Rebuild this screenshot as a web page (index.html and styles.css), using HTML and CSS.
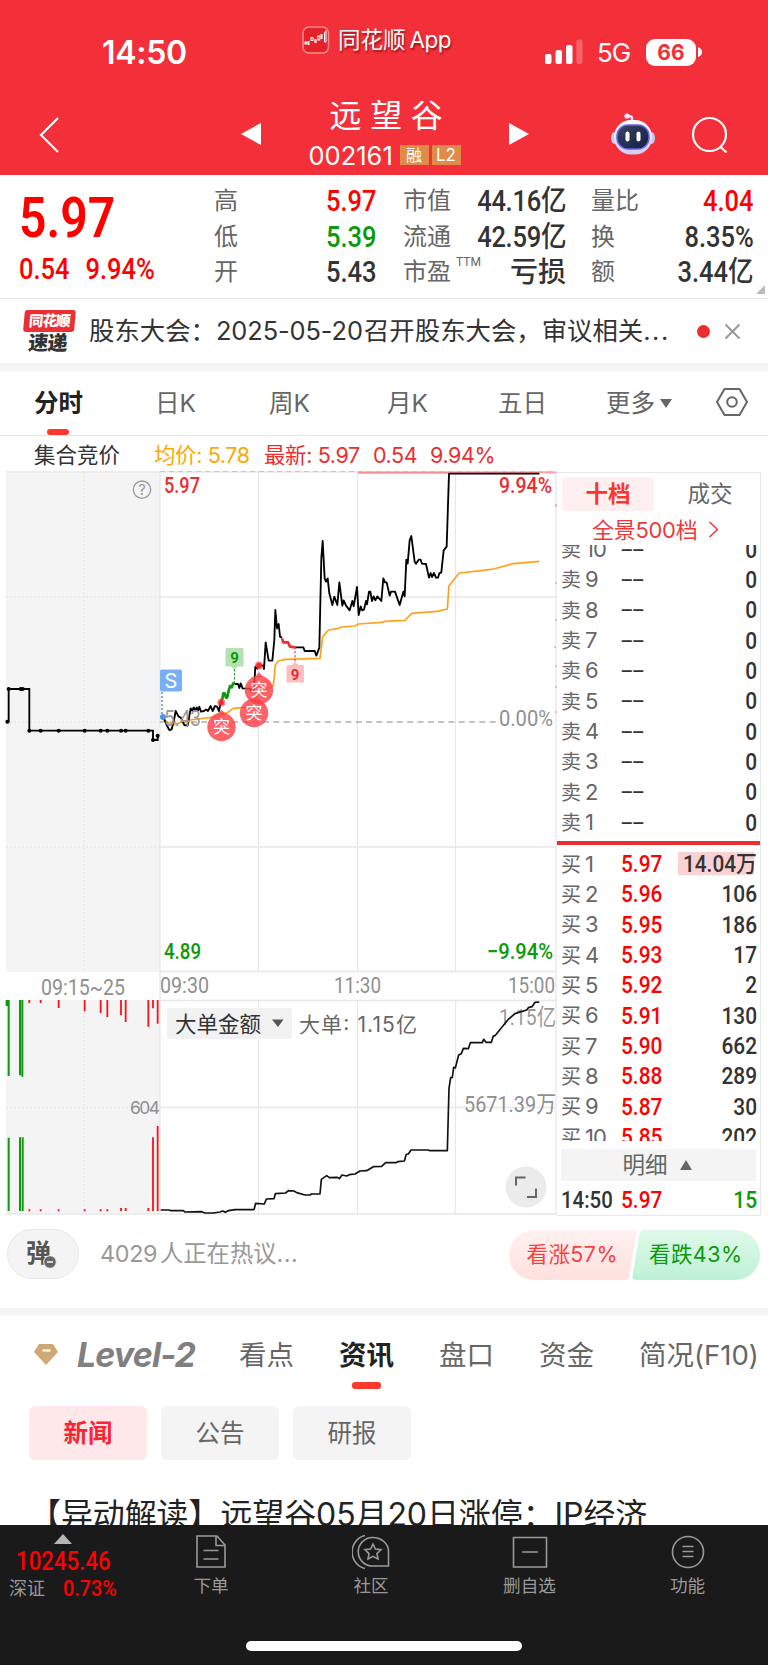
FILE: index.html
```html
<!DOCTYPE html>
<html lang="zh-CN">
<head>
<meta charset="utf-8">
<title>远望谷 002161</title>
<link rel="stylesheet" href="styles.css">
</head>
<body>
<div class="app">
  <header class="header">
    <div class="status">
      <span class="clock">14:50</span>
      <div class="brand">
        <svg width="28" height="28" viewBox="0 0 28 28"><rect x="1" y="1" width="25.500" height="26" rx="6" fill="#e3222a" stroke="#ff8a8a" stroke-width="1.500"/><g fill="#fff" stroke="#fff"><rect x="3" y="16" width="1.500" height="2"/><path d="M6.500 15v4M13.500 13v4M19.500 8v5" stroke-width="2"/><g fill="none" stroke-width="1"><rect x="9" y="11.500" width="2" height="3"/><rect x="15.800" y="10" width="2" height="4"/><path d="M22.500 16V7l1.500-2.500V16z"/></g></g></svg>
        <span>同花顺<i>App</i></span>
      </div>
      <div class="signal">
        <svg width="40" height="26" viewBox="0 0 40 26" fill="#fff"><rect x="1" y="15" width="6.500" height="10" rx="2"/><rect x="11.500" y="11" width="6.500" height="14" rx="2"/><rect x="22" y="6" width="6.500" height="19" rx="2"/><rect x="32.500" y="0.500" width="6" height="24.500" rx="2" opacity=".25"/></svg>
        <span class="net">5G</span>
        <span class="battery">66</span>
        <svg class="nub" width="5" height="10" viewBox="0 0 5 10"><path d="M0 0Q4 1.500 4 5T0 10z" fill="#fff"/></svg>
      </div>
    </div>
    <div class="navbar">
      <svg class="back" width="24" height="38" viewBox="0 0 24 38"><path d="M20 2 3 19 20 36" fill="none" stroke="#fff" stroke-width="2.200"/></svg>
      <svg class="prev" width="22" height="24" viewBox="0 0 22 24"><path d="M1 12 21 1v22z" fill="#fff"/></svg>
      <div class="stock">
        <h1>远望谷</h1>
        <div class="code"><span>002161</span><b class="cjk">融</b><b>L2</b></div>
      </div>
      <svg class="next" width="22" height="24" viewBox="0 0 22 24"><path d="M21 12 1 1v22z" fill="#fff"/></svg>
      <svg class="robot" width="46" height="44" viewBox="0 0 46 44">
        <defs><linearGradient id="shell" x2="0" y2="1"><stop stop-color="#fff"/><stop offset="1" stop-color="#cfcdf6"/></linearGradient><linearGradient id="face" x2="1" y2="1"><stop stop-color="#3a4565"/><stop offset="1" stop-color="#101d45"/></linearGradient></defs>
        <path d="M22 9V6q0-2-5-2" fill="none" stroke="#e9e7ff" stroke-width="2.500"/><circle cx="17" cy="4" r="2.600" fill="#f0efff"/>
        <ellipse cx="4.500" cy="26" rx="3.500" ry="6" fill="#c9c7f2"/><ellipse cx="41.500" cy="26" rx="3.500" ry="6" fill="#c9c7f2"/>
        <rect x="4" y="8" width="38" height="34.500" rx="17" fill="url(#shell)"/>
        <rect x="7" y="13" width="32" height="24" rx="11" fill="url(#face)" stroke="#6f62de" stroke-width="1.500"/>
        <rect x="15.500" y="19.500" width="4" height="10" rx="2" fill="#fff"/><rect x="26.500" y="19.500" width="4" height="10" rx="2" fill="#fff"/>
      </svg>
      <svg class="search" width="38" height="38" viewBox="0 0 38 38" fill="none" stroke="#fff" stroke-width="2.200"><circle cx="18.500" cy="18.500" r="16.500"/><path d="m29.500 31 6 5.500"/></svg>
    </div>
  </header>

  <section class="quote">
    <div class="price"><div class="last">5.97</div><div class="change"><span>0.54</span><span>9.94%</span></div></div>
    <dl class="stats s1">
      <dt>高</dt><dd class="r">5.97</dd><dt>低</dt><dd class="g">5.39</dd><dt>开</dt><dd>5.43</dd>
    </dl>
    <dl class="stats s2">
      <dt>市值</dt><dd>44.16亿</dd><dt>流通</dt><dd>42.59亿</dd><dt class="pe">市盈<sup>TTM</sup></dt><dd class="word">亏损</dd>
    </dl>
    <dl class="stats s3">
      <dt>量比</dt><dd class="r">4.04</dd><dt>换</dt><dd>8.35%</dd><dt>额</dt><dd>3.44亿</dd>
    </dl>
    <i class="corner"></i>
  </section>

  <section class="flash">
    <div class="flashlogo"><b>同花顺</b><em>速递</em></div>
    <p>股东大会：<span class="date">2025-05-20</span>召开股东大会，审议相关<span class="dots">...</span></p>
    <i class="dot"></i>
    <svg width="17" height="17" viewBox="0 0 17 17"><path d="m1.500 1.500 14 14m0-14-14 14" stroke="#999" stroke-width="2"/></svg>
  </section>

  <nav class="periods">
    <span class="on">分时</span><span>日K</span><span>周K</span><span>月K</span><span>五日</span><span>更多</span>
    <svg class="caret" width="12" height="9" viewBox="0 0 12 9"><path d="M0 0h12L6 9z" fill="#666"/></svg>
    <svg class="hex" width="32" height="30" viewBox="0 0 32 30" fill="none" stroke="#666" stroke-width="2"><path d="M8.500 2h15L31 15l-7.500 13h-15L1 15z" stroke-linejoin="round"/><circle cx="16" cy="15" r="4.800"/></svg>
  </nav>

  <div class="legend"><span class="lg0">集合竞价</span><span class="lg1">均价: 5.78</span><span class="lg2">最新: 5.97</span><span class="lg3">0.54</span><span class="lg4">9.94%</span></div>

  <main class="board">
    <svg class="chart" width="557" height="746" viewBox="0 470 557 746">
      <path d="M6 472h154v500H6zM6 1000h154v214H6z" fill="#f4f4f4"/>
      <g fill="none" stroke="#e8e8e8" stroke-width="1.300">
        <path d="M6 472H557M160 472V1214M258.500 472v500M357.500 472v500M455.500 472v500M556 472V1215M160 597H556M160 847H556M160 971.500H556M160 1000.500H556M258.500 1000v214M357.500 1000v214M455.500 1000v214M160 1107.500H556M6 1214H556"/>
        <path d="M84 472V972M84 1000V1214M6 597H160M6 722H160M6 847H160M6 1107.500H160" stroke-dasharray="2 2"/>
      </g>
      <path d="M160 471.500H552" stroke="#d9c7a0" stroke-dasharray="5 4"/>
      <path d="M358 472.500H556" stroke="#f8a5a7" stroke-width="2"/>
      <path d="M160 722H500" stroke="#888" stroke-width="1.200" stroke-dasharray="6 4.300"/>
      <path d="M556 504v3M556 582v2M556 619v2M554 647h2M556 665v2M556 686v2M556 711v2" stroke="#f27d7d"/>

      <g transform="translate(0 470) scale(.33333)">
        <path d="M20 755h6v-98h62v125h371v28h14v-14" fill="none" stroke="#000" stroke-width="5.500"/>
        <g><circle cx="26" cy="657" r="6"/><circle cx="62" cy="657" r="6"/><circle cx="68" cy="657" r="6"/><circle cx="22" cy="755" r="6"/><circle cx="88" cy="782" r="6"/><circle cx="122" cy="782" r="6"/><circle cx="176" cy="782" r="6"/><circle cx="254" cy="782" r="6"/><circle cx="302" cy="782" r="6"/><circle cx="322" cy="782" r="6"/><circle cx="363" cy="782" r="6"/><circle cx="377" cy="782" r="6"/><circle cx="445" cy="782" r="6"/><circle cx="459" cy="810" r="6"/><circle cx="473" cy="797" r="6"/></g>
        <g fill="none" stroke="#999" stroke-width="4"><circle cx="426" cy="59" r="26"/></g>
      </g>
      <text x="142" y="495" class="gray" font-size="14" text-anchor="middle">?</text>

      <g fill="none" stroke="#ffa21a" stroke-width="5" stroke-linejoin="round">
        <path transform="translate(150 600) scale(.33333)" d="M38 358 50 365 70 374 120 360 200 350 215 343 232 338 250 325 310 320 320 290 340 270 370 258"/>
        <path transform="translate(270 465) scale(.33333)" d="M10 664 16 600 25 588 45 583 150 580 158 515 176 495 205 490 215 486 255 483 265 477 335 472 345 469 405 466 425 445 500 439 532 432 537 362 548 348 568 324 640 316 670 312 730 296 808 289"/>
      </g>
      <g fill="none" stroke="#000" stroke-width="5.500" stroke-linejoin="round">
        <g transform="translate(150 600) scale(.33333)">
          <path d="M36 355 42 355 50 375 58 390 65 388 72 360 77 333 86 350 92 352 103 375 113 377 122 325 127 332 131 322 136 332 140 322 144 332 148 320 153 335 162 333 168 328 174 333 182 318 188 333 195 318 201 320 207 333 212 308M255 252 264 252 268 264 272 250 278 265 300 266 304 275 312 270 316 200 322 206 326 197 340 197 342 207 347 127 356 182 367 182 373 120 376 30 381 85 386 72 390 110 396 113M435 142 460 142 464 153 494 153 499 167 508 143"/>
          <path stroke="#0a9a0a" stroke-width="8" d="M213 307 218 292 220 280 224 280 228 293 232 292 236 272 240 258 245 262 250 250 255 252"/>
          <path stroke="#eb2f35" stroke-width="8" d="M396 115 400 127 414 127 420 140 435 142"/>
        </g>
        <path transform="translate(270 465) scale(.33333)" d="M148 548 154 280 158 228 164 340 168 350 173 340 178 385 187 420 193 395 202 420 208 352 217 422 221 406 228 422 239 436 247 408 251 424 261 366 266 450 272 424 276 436 282 434 288 408 291 418 297 380 301 380 306 408 311 394 316 406 322 394 334 408 340 340 345 352 350 352 359 392 363 380 375 380 389 420 400 380 404 394 409 284 413 296 419 226 424 213 434 290 438 296 446 284 452 284 456 296 468 297 477 338 482 324 486 336 492 324 498 338 504 338 508 325 514 322 521 256 530 245 537 26 808 26"/>
      </g>
      <path d="M358 473H540" stroke="#e0343a" stroke-opacity=".35" stroke-width="1"/>

      <g class="din">
        <text x="164" y="493" class="red" textLength="36" lengthAdjust="spacingAndGlyphs">5.97</text>
        <text x="499" y="493" class="red" textLength="53" lengthAdjust="spacingAndGlyphs">9.94%</text>
        <text x="164" y="959" class="green" textLength="37" lengthAdjust="spacingAndGlyphs">4.89</text>
        <text x="487" y="959" class="green" textLength="66" lengthAdjust="spacingAndGlyphs">−9.94%</text>
        <text x="164" y="726" class="pale" textLength="37" lengthAdjust="spacingAndGlyphs">5.43</text>
        <text x="499" y="726" class="gray" textLength="54" lengthAdjust="spacingAndGlyphs">0.00%</text>
        <text x="41" y="994.500" class="gray" textLength="84" lengthAdjust="spacingAndGlyphs">09:15~25</text>
        <text x="160" y="993" class="gray" textLength="49" lengthAdjust="spacingAndGlyphs">09:30</text>
        <text x="334" y="993" class="gray" textLength="47" lengthAdjust="spacingAndGlyphs">11:30</text>
        <text x="508" y="993" class="gray" textLength="47" lengthAdjust="spacingAndGlyphs">15:00</text>
        <text x="499" y="1025" class="pale" textLength="57" lengthAdjust="spacingAndGlyphs">1.15亿</text>
        <text x="464" y="1112" class="gray" textLength="92" lengthAdjust="spacingAndGlyphs">5671.39万</text>
      </g>
      <text x="130" y="1114" class="gray" font-size="17.500" textLength="30">604</text>

      <path d="M162 692v22" stroke="#77aff5" stroke-width="2" stroke-dasharray="2 2"/>
      <rect x="160" y="669.500" width="22" height="22" rx="2" fill="#7ab0f3"/><text x="171" y="687.500" font-size="20" fill="#fff" text-anchor="middle">S</text>
      <circle cx="163" cy="717" r="3" fill="#4c93ef"/>
      <path d="M234.500 665v17" stroke="#21a121" stroke-width="1.200" stroke-dasharray="2.500 1.500"/>
      <path d="M227 648h15a1.500 1.500 0 0 1 1.500 1.500v17H238l-3.500 3-3.500-3h-5.500v-17a1.500 1.500 0 0 1 1.500-1.500z" fill="#b5e2b5"/>
      <text x="234.500" y="663" font-size="15" class="green mark">9</text>
      <path d="M295 647v18" stroke="#eb4c50" stroke-width="1.200" stroke-dasharray="2.500 1.500"/>
      <path d="M287.500 665h4l3.500-3 3.500 3h4a1.500 1.500 0 0 1 1.500 1.500v16h-17.500v-16z" fill="#f9c0c2"/>
      <text x="295" y="679.500" font-size="15" class="red mark">9</text>
      <g fill="#fb262c"><circle cx="221.300" cy="702.500" r="4" opacity=".55"/><circle cx="221.300" cy="702.500" r="2.500"/><circle cx="259" cy="665.500" r="4" opacity=".55"/><circle cx="259" cy="665.500" r="2.700"/></g>
      <g fill="#ff4047" fill-opacity=".82"><circle cx="221.500" cy="727" r="14.200"/><path d="m217 714 4.500-4 4.500 4z"/><circle cx="254" cy="713" r="14.200"/><circle cx="259" cy="690" r="14.200"/><path d="m255 677 4-5 4 5z"/></g>
      <g class="tu" font-size="17" fill="#fff"><text x="221.500" y="733">突</text><text x="254" y="719">突</text><text x="259" y="696">突</text></g>

      <g transform="translate(0 920) scale(.33333)" fill="none" stroke-width="6">
        <path stroke="#119811" d="M20 240v18M26 240v228M60 240v226M67 240v230M26 653v220M60 652v221M68 652v221"/>
        <path stroke="#f5161c" stroke-width="5.500" d="M88 240v9M122 240v9M176 240v24M254 240v34M302 240v39M322 240v51M363 240v46M377 240v66M445 240v80M459 240v25M473 240v71M88 868v6M122 868v6M176 868v6M254 868v6M302 868v6M322 868v6M363 864v9M377 864v9M445 864v9M459 652v221M473 618v255"/>
      </g>
      <rect x="167" y="1008" width="125" height="31" rx="3" fill="#f2f2f2"/>
      <text x="175" y="1031.500" font-size="21.500" fill="#333">大单金额</text>
      <path d="M272 1019.500h11.500L278 1027z" fill="#555"/>
      <text x="299" y="1031.500" font-size="21" fill="#666" textLength="118">大单: 1.15亿</text>
      <g fill="none" stroke="#111" stroke-width="5" stroke-linejoin="round">
        <path transform="translate(0 920) scale(.33333)" d="M482 870 508 870 512 872 550 872 555 876 605 875 615 879 640 879 660 876 668 873 676 877 685 872 705 869 762 869"/>
        <path transform="translate(240 980) scale(.33333)" d="M42 689 47 670 73 672 79 657 102 656 106 641 137 639 145 632 162 633 170 638 195 645 210 645 214 642 240 642 244 598 260 587 268 593 292 592 298 596 306 585 320 588 328 584 345 582 360 573 380 572 400 560 425 559 437 548 468 548 473 545 493 543 499 523 505 522 513 510 565 510 570 512 622 512 627 325 632 293 637 292 641 262 646 264 656 225 664 221 670 205 685 206 691 188 727 188 731 178 738 187 754 187 760 168 765 167 805 118 825 101 860 90 865 83 876 80 885 67 898 66"/>
      </g>
      <circle cx="526" cy="1187" r="20.500" fill="#ebebeb"/>
      <path d="M516 1185.500V1177.500h9.500M527 1197h9v-8.500" fill="none" stroke="#666" stroke-width="2"/>
    </svg>

    <aside class="book">
      <div class="booktabs"><span class="on">十档</span><span>成交</span></div>
      <div class="depth">全景500档<svg width="11" height="17" viewBox="0 0 11 17"><path d="m1.500 1 8 7.500-8 7.500" fill="none" stroke="#eb3a3a" stroke-width="1.500"/></svg></div>
      <div class="asks">
        <div class="row"><span>卖<i>10</i></span><b>--</b><em>0</em></div>
        <div class="row"><span>卖<i>9</i></span><b>--</b><em>0</em></div>
        <div class="row"><span>卖<i>8</i></span><b>--</b><em>0</em></div>
        <div class="row"><span>卖<i>7</i></span><b>--</b><em>0</em></div>
        <div class="row"><span>卖<i>6</i></span><b>--</b><em>0</em></div>
        <div class="row"><span>卖<i>5</i></span><b>--</b><em>0</em></div>
        <div class="row"><span>卖<i>4</i></span><b>--</b><em>0</em></div>
        <div class="row"><span>卖<i>3</i></span><b>--</b><em>0</em></div>
        <div class="row"><span>卖<i>2</i></span><b>--</b><em>0</em></div>
        <div class="row"><span>卖<i>1</i></span><b>--</b><em>0</em></div>
      </div>
      <div class="bids">
        <div class="row hot"><span>买<i>1</i></span><b>5.97</b><em>14.04万</em></div>
        <div class="row"><span>买<i>2</i></span><b>5.96</b><em>106</em></div>
        <div class="row"><span>买<i>3</i></span><b>5.95</b><em>186</em></div>
        <div class="row"><span>买<i>4</i></span><b>5.93</b><em>17</em></div>
        <div class="row"><span>买<i>5</i></span><b>5.92</b><em>2</em></div>
        <div class="row"><span>买<i>6</i></span><b>5.91</b><em>130</em></div>
        <div class="row"><span>买<i>7</i></span><b>5.90</b><em>662</em></div>
        <div class="row"><span>买<i>8</i></span><b>5.88</b><em>289</em></div>
        <div class="row"><span>买<i>9</i></span><b>5.87</b><em>30</em></div>
        <div class="row"><span>买<i>10</i></span><b>5.85</b><em>202</em></div>
      </div>
      <div class="detail">明细<svg width="12" height="10" viewBox="0 0 12 10"><path d="M0 10h12L6 0z" fill="#666"/></svg></div>
      <div class="row tick"><span>14:50</span><b>5.97</b><em>15</em></div>
    </aside>
  </main>

  <section class="talk">
    <div class="bullet"><span>弹</span><svg width="14" height="14" viewBox="0 0 14 14"><circle cx="7" cy="7" r="6.300" fill="#666" stroke="#f4f4f4"/><path d="M4 7h6" stroke="#fff" stroke-width="1.500"/></svg></div>
    <p><span class="count">4029</span>人正在热议<span class="dots">...</span></p>
    <div class="votes">
      <svg width="254" height="52" viewBox="0 0 254 52">
        <defs><linearGradient id="up" x2="0" y2="1"><stop stop-color="#fff1f0"/><stop offset="1" stop-color="#fee1de"/></linearGradient><linearGradient id="down" x2="0" y2="1"><stop stop-color="#e0f9ea"/><stop offset="1" stop-color="#bdf1d6"/></linearGradient></defs>
        <path d="M26 1h100q3 0 2.500 3L121 48q-.5 3-4 3H26A25 25 0 0 1 26 1z" fill="url(#up)"/>
        <path d="M136 1h91a25 25 0 0 1 0 50h-99q-4 0-3.500-3.500L131.500 5q.5-4 4.500-4z" fill="url(#down)"/>
        <text x="18.500" y="33" font-size="21.500" fill="#f8413f" textLength="91">看涨57%</text>
        <text x="141" y="33" font-size="21.500" fill="#0b9a0b" textLength="93">看跌43%</text>
      </svg>
    </div>
  </section>

  <nav class="sections">
    <svg width="26" height="24" viewBox="0 0 26 24"><path d="M6 1h14l5 8-12 13L1 9z" fill="#cfa873"/><path d="M9.500 7.500h8" stroke="#fff" stroke-width="2.200"/></svg>
    <em>Level-2</em>
    <span>看点</span><span class="on">资讯</span><span>盘口</span><span>资金</span><span>简况(F10)</span>
  </nav>
  <div class="chips"><span class="on">新闻</span><span>公告</span><span>研报</span></div>
  <h2 class="headline">【异动解读】远望谷05月20日涨停：IP经济</h2>

  <footer class="footer">
    <div class="index">
      <svg width="18" height="10" viewBox="0 0 18 10"><path d="M0 10h18L9 0z" fill="#b5b5b5"/></svg>
      <b>10245.46</b>
      <div><span>深证</span><em>0.73%</em></div>
    </div>
    <div class="item"><svg width="36" height="36" viewBox="0 0 36 36"><path d="M4 2h20l8 9v22H4zM23 2v9.500h9M10.500 16.500h15M10.500 25h15"/></svg><span>下单</span></div>
    <div class="item"><svg width="38" height="36" viewBox="0 0 38 36"><path d="M20.500 3.500c9 0 16 6 16 14V32h-16a14.250 14.250 0 0 1 0-28.500zM13 1.500a17 17 0 0 0 0 33"/><path d="m21 10 2.400 5 5.600.7-4 3.900 1 5.400-5-2.600-5 2.600 1-5.400-4-3.900 5.600-.7z"/></svg><span>社区</span></div>
    <div class="item"><svg width="36" height="36" viewBox="0 0 36 36"><path d="M1.500 3.500h33v29.500h-33zM10 18h16"/></svg><span>删自选</span></div>
    <div class="item"><svg width="36" height="36" viewBox="0 0 36 36"><circle cx="18" cy="18" r="15.500"/><path d="M12.500 12.500h11M12.500 17.500h11M12.500 22.500h11"/></svg><span>功能</span></div>
    <i class="home"></i>
  </footer>
</div>
</body>
</html>
```

FILE: styles.css
```css
* { box-sizing: border-box; margin: 0; padding: 0; }
body { width: 768px; background: #fff; font-family: Inter, "Noto Sans CJK SC", sans-serif; color: #333; }
i, em { font-style: normal; }
svg { display: block; flex: none; }
.app { width: 768px; height: 1665px; overflow: hidden; display: flex; flex-direction: column; }
.app > * { flex: none; }

.header { height: 175px; background: #f33039; color: #fff; }
.status { height: 88px; display: grid; grid-template-columns: 302px 240px 226px; }
.clock { padding: 35px 0 0 102px; font-size: 32px; line-height: 36px; font-weight: 600; letter-spacing: -.3px; }
.brand { display: flex; align-items: center; gap: 8px; height: 28px; margin-top: 26px; font-size: 22.500px; text-shadow: 1px 2px 2px rgba(90,0,0,.6); white-space: nowrap; }
.brand span { line-height: 28px; }
.brand i { margin-left: 4px; letter-spacing: -.5px; }
.signal { display: flex; align-items: center; height: 28px; margin-top: 38px; padding-left: 2px; }
.net { margin-left: 13px; font-size: 26px; letter-spacing: -1px; width: 49px; }
.battery { width: 50px; height: 27px; border-radius: 9px; background: #fff; color: #f33039; font-size: 21px; line-height: 27px; font-weight: 700; text-align: center; }
.nub { margin-left: 2px; }
.navbar { height: 87px; display: flex; align-items: flex-start; }
.back { margin: 28px 0 0 38px; }
.prev { margin: 34px 0 0 178px; width: 22px; }
.stock { width: 248px; padding-top: 5px; display: flex; flex-direction: column; align-items: center; }
.stock h1 { font-size: 32px; line-height: 46px; font-weight: 400; letter-spacing: 8.700px; margin-right: -9px; }
.code { display: flex; align-items: center; height: 30px; margin-top: 1px; }
.code span { font-size: 25.500px; letter-spacing: 0; width: 91px; }
.code b { width: 29px; height: 20px; margin-right: 3px; background: #e08c48; font-weight: 400; font-size: 17px; line-height: 20px; text-align: center; }
.code .cjk { font-size: 16px; }
.next { margin: 34px 0 0 -2px; }
.robot { margin: 24px 0 0 80px; }
.search { margin: 28px 0 0 35px; }

.quote { height: 124px; border-bottom: 1px solid #e7e7e7; display: grid; grid-template-columns: 214px 163px 26px 163px 25px 163px 14px; font-family: Roboto, "Noto Sans CJK SC", sans-serif; }
.price { color: #f00; padding-left: 19px; }
.last { font-size: 56px; font-weight: 600; line-height: 60px; margin-top: 13px; transform: scaleX(.86); transform-origin: left; }
.change { font-size: 29px; font-weight: 500; line-height: 34px; margin-top: 4px; transform: scaleX(.88); transform-origin: left; display: flex; gap: 18px; }
.stats { display: grid; grid-template-columns: 48px minmax(0, 1fr); grid-auto-rows: 35.500px; padding-top: 9px; align-items: center; white-space: nowrap; }
.stats dt { font-size: 24px; line-height: 35px; color: #666; }
.stats dd { font-size: 29px; line-height: 35px; font-weight: 500; justify-self: end; transform: scaleX(.88); transform-origin: right; }
.s2 dd:nth-of-type(-n+2) { letter-spacing: -.3px; }
.stats .word { font-size: 28px; transform: none; }
.s1 { grid-column: 2; } .s2 { grid-column: 4; } .s3 { grid-column: 6; }
.pe { display: flex; }
.pe sup { font-size: 12px; line-height: 14px; margin: 0 0 0 5px; }
.r { color: #f00; } .g { color: #0a9a0a; }
.corner { grid-column: 7; align-self: end; margin: 0 0 4px 2px; width: 9px; height: 9px; background: #bbb; clip-path: polygon(100% 0, 100% 100%, 0 100%); }

.flash { height: 72px; border-bottom: 8px solid #f4f4f4; display: flex; align-items: center; }
.flashlogo { width: 53px; height: 44px; margin: 2px 14px 0 22px; display: flex; flex-direction: column; align-items: center; transform: skewX(-5deg); }
.flashlogo b { width: 51px; height: 22px; border-radius: 3px; background: #ea3034; color: #fff; font-size: 14.500px; line-height: 22px; font-weight: 900; text-align: center; letter-spacing: -.8px; }
.flashlogo em { font-size: 20px; line-height: 22px; font-weight: 900; letter-spacing: -.8px; }
.flash p { width: 608px; font-size: 25.400px; line-height: 40px; white-space: nowrap; }
.date { display: inline-block; width: 148px; letter-spacing: -.1px; }
.flash .dots { letter-spacing: 1.500px; }
.dot { width: 13px; height: 13px; border-radius: 50%; background: #ea2e30; margin-right: 14px; }

.periods { height: 65px; border-bottom: 1px solid #e7e7e7; display: flex; font-size: 24.500px; line-height: 65px; color: #666; white-space: nowrap; }
.periods .on { position: relative; padding-left: 34px; width: 83px; margin-right: 34px; color: #222; font-weight: 700; }
.periods .on::after, .sections .on::after { content: ""; position: absolute; border-radius: 3px; background: #fa392f; }
.periods .on::after { left: 47px; top: 58px; width: 22px; height: 6px; }
.periods span:nth-child(2) { width: 114px; margin-left: 38px; }
.periods span:nth-child(3) { width: 118px; }
.periods span:nth-child(4) { width: 111px; }
.periods span:nth-child(5) { width: 108px; }
.periods span:nth-child(6) { width: 54px; }
.caret { margin: 28px 0 0; }
.hex { margin: 16px 0 0 44px; }

.legend { height: 34px; display: flex; font-size: 21.500px; line-height: 38px; white-space: nowrap; color: #ea2e30; }
.lg0 { padding-left: 34px; width: 154px; color: #333; }
.lg1 { width: 110px; color: #fda900; }
.lg2 { width: 109px; } .lg3 { width: 57px; }
.legend span { letter-spacing: -.4px; }
.legend .lg0 { letter-spacing: 0; }

.board { display: flex; height: 746px; }
.chart text { white-space: pre; }
.din { font-family: Roboto, "Noto Sans CJK SC", sans-serif; font-size: 22.500px; font-weight: 500; }
.din .pale, .din .gray { font-weight: 400; }
.red { fill: #eb2c30; } .green { fill: #0a9a0a; } .gray { fill: #909090; } .pale { fill: #999; }
.mark { text-anchor: middle; font-weight: 700; font-family: Roboto, sans-serif; }
.tu { text-anchor: middle; }
.book { width: 204px; height: 744px; margin-top: 2px; border: 1px solid #e8e8e8; border-left: 0; }
.booktabs { display: flex; margin: 4px 0 0 5px; height: 34px; font-size: 22.500px; line-height: 34px; text-align: center; color: #666; }
.booktabs span { flex: none; width: 92px; margin-right: 10px; }
.booktabs .on { background: #fff0ef; border-radius: 3px; color: #fa342f; font-weight: 700; }
.depth { display: flex; align-items: center; gap: 11px; height: 34px; padding: 3px 0 0 35px; font-size: 22px; line-height: 34px; color: #eb3a3a; letter-spacing: -.3px; }
.asks { height: 300px; overflow: hidden; display: flex; flex-direction: column; justify-content: flex-end; padding-bottom: 3px; border-bottom: 4px solid #ea2e30; }
.row { flex: none; height: 30.350px; line-height: 30.350px; padding: 0 3px 0 4px; display: flex; align-items: center; font-size: 23.200px; }
.row span { width: 60px; font-size: 20px; color: #666; white-space: nowrap; }
.row i { font-size: 22px; margin-left: 4px; letter-spacing: -1px; }
.row b, .row em { font-family: Roboto, "Noto Sans CJK SC", sans-serif; font-weight: 500; transform: scaleX(.9); }
.row b { color: #f00; transform-origin: left; width: 46px; }
.asks .row b { color: #333; transform: scaleX(1.9); font-weight: 400; font-size: 22px; }
.row em { flex: 1; text-align: right; transform-origin: right; white-space: nowrap; }
.bids { height: 296px; overflow: hidden; padding-top: 4px; }
.hot { background: linear-gradient(#fbd2d4, #fbd2d4) 121px 3px / 76px 23px no-repeat; }
.detail { margin: 8px 4px 0 4px; height: 32px; background: #f4f4f4; display: flex; justify-content: center; align-items: center; gap: 12px; font-size: 22.500px; line-height: 32px; color: #666; padding-right: 3px; }
.tick { margin-top: 4px; }
.tick span { font-family: Roboto, sans-serif; font-size: 23.200px; color: #333; font-weight: 500; transform: scaleX(.88); transform-origin: left; }
.tick em { color: #0a9a0a; }

.talk { height: 99px; border-bottom: 7px solid #f4f4f4; display: flex; align-items: flex-start; padding-top: 13px; }
.bullet { width: 72px; height: 50px; margin-left: 7px; border: 1.500px solid #e9e9e9; border-radius: 25px; background: #f4f4f4; display: flex; padding: 0 0 0 18px; font-size: 25px; line-height: 46px; font-weight: 700; color: #555; }
.bullet svg { margin: 25px 0 0 -8px; }
.talk p { margin-left: 21px; width: 408px; font-size: 23.300px; line-height: 50px; color: #999; white-space: nowrap; }
.count { display: inline-block; width: 60px; letter-spacing: -.3px; }
.talk .dots { letter-spacing: .5px; }

.sections { height: 91px; display: flex; align-items: flex-start; font-size: 27.500px; line-height: 80px; color: #666; padding-left: 33px; white-space: nowrap; }
.sections svg { margin-top: 28px; }
.sections em { width: 180px; padding-left: 18px; font-style: italic; font-weight: 700; font-size: 34px; letter-spacing: -.9px; color: #808080; }
.sections span { width: 100px; }
.sections .on { position: relative; color: #222; font-weight: 700; }
.sections .on::after { left: 13px; top: 67px; width: 29px; height: 7px; }
.chips { display: flex; gap: 14px; padding-left: 29px; height: 54px; }
.chips span { width: 118px; height: 54px; border-radius: 6px; background: #f4f4f4; font-size: 24.500px; line-height: 55px; text-align: center; color: #666; }
.chips .on { background: #ffe8e9; color: #fb2433; font-weight: 700; }
.headline { margin-top: 33px; height: 32px; overflow: hidden; padding-left: 29px; font-size: 32px; line-height: 44px; font-weight: 400; color: #222; white-space: nowrap; letter-spacing: -.1px; }

.footer { height: 140px; background: #1a1a1a; display: grid; grid-template-columns: 132px 158px 162px 155px 161px; grid-template-rows: 116px 24px; color: #999; }
.index { display: flex; flex-direction: column; align-items: flex-start; padding-top: 9px; color: #f00; font-family: Roboto, "Noto Sans CJK SC", sans-serif; }
.index > svg { margin-left: 54px; }
.index b { margin: 2px 0 0 16px; font-size: 25px; line-height: 32px; font-weight: 500; transform: scaleX(.89); transform-origin: left; }
.index div { display: flex; align-items: center; height: 22px; margin-left: 9px; font-size: 18px; line-height: 22px; }
.index div span { width: 54px; color: #999; }
.index em { font-size: 21.500px; font-weight: 500; transform: scaleX(.92); transform-origin: left; }
.item { display: flex; flex-direction: column; align-items: center; gap: 6px; padding-top: 9px; font-size: 17.600px; line-height: 20px; }
.item svg { fill: none; stroke: #999; stroke-width: 1.600; }
.home { grid-column: 1 / -1; width: 276px; height: 10px; margin-left: 246px; border-radius: 5px; background: #fff; }
```
